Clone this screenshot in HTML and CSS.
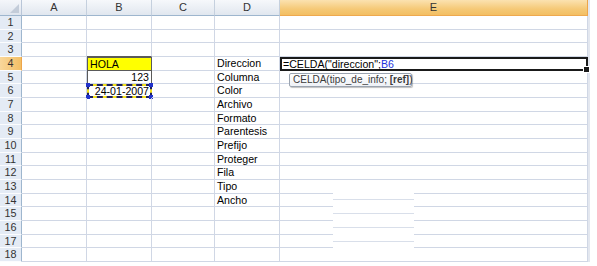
FILE: index.html
```html
<!DOCTYPE html>
<html lang="es">
<head>
    <meta charset="UTF-8">
    <title>CELDA</title>
    <link rel="stylesheet" href="styles.css">
</head>
<body>
    <div class="sheet">
        <!-- column headers -->
        <div class="corner"></div>
        <div class="col-head">A</div>
        <div class="col-head">B</div>
        <div class="col-head">C</div>
        <div class="col-head">D</div>
        <div class="col-head active">E</div>
        <div class="col-head edge"></div>

        <!-- 1 -->
        <div class="row-head">1</div>
        <div class="cell"></div><div class="cell"></div><div class="cell"></div><div class="cell"></div><div class="cell"></div><div class="edge"></div>
        <!-- 2 -->
        <div class="row-head">2</div>
        <div class="cell"></div><div class="cell"></div><div class="cell"></div><div class="cell"></div><div class="cell"></div><div class="edge"></div>
        <!-- 3 -->
        <div class="row-head">3</div>
        <div class="cell"></div><div class="cell above-box"></div><div class="cell"></div><div class="cell"></div><div class="cell"></div><div class="edge"></div>
        <!-- 4 -->
        <div class="row-head active">4</div>
        <div class="cell"></div>
        <div class="cell hola">HOLA</div>
        <div class="cell"></div>
        <div class="cell">Direccion</div>
        <div class="cell editing">
            =CELDA("direccion";<span class="ref">B6</span>
            <div class="tip">CELDA(tipo_de_info; <b>[ref]</b>)</div>
        </div>
        <div class="edge"></div>
        <!-- 5 -->
        <div class="row-head">5</div>
        <div class="cell"></div>
        <div class="cell num boxed">123</div>
        <div class="cell"></div>
        <div class="cell">Columna</div>
        <div class="cell"></div><div class="edge"></div>
        <!-- 6 -->
        <div class="row-head">6</div>
        <div class="cell"></div>
        <div class="cell num ants">24-01-2007<i class="h tl"></i><i class="h tr"></i><i class="h bl"></i><i class="h br"></i></div>
        <div class="cell"></div>
        <div class="cell">Color</div>
        <div class="cell"></div><div class="edge"></div>
        <!-- 7 -->
        <div class="row-head">7</div>
        <div class="cell"></div><div class="cell"></div><div class="cell"></div><div class="cell">Archivo</div><div class="cell"></div><div class="edge"></div>
        <!-- 8 -->
        <div class="row-head">8</div>
        <div class="cell"></div><div class="cell"></div><div class="cell"></div><div class="cell">Formato</div><div class="cell"></div><div class="edge"></div>
        <!-- 9 -->
        <div class="row-head">9</div>
        <div class="cell"></div><div class="cell"></div><div class="cell"></div><div class="cell">Parentesis</div><div class="cell"></div><div class="edge"></div>
        <!-- 10 -->
        <div class="row-head">10</div>
        <div class="cell"></div><div class="cell"></div><div class="cell"></div><div class="cell">Prefijo</div><div class="cell"></div><div class="edge"></div>
        <!-- 11 -->
        <div class="row-head">11</div>
        <div class="cell"></div><div class="cell"></div><div class="cell"></div><div class="cell">Proteger</div><div class="cell"></div><div class="edge"></div>
        <!-- 12 -->
        <div class="row-head">12</div>
        <div class="cell"></div><div class="cell"></div><div class="cell"></div><div class="cell">Fila</div><div class="cell"></div><div class="edge"></div>
        <!-- 13 -->
        <div class="row-head">13</div>
        <div class="cell"></div><div class="cell"></div><div class="cell"></div><div class="cell">Tipo</div><div class="cell"></div><div class="edge"></div>
        <!-- 14 -->
        <div class="row-head">14</div>
        <div class="cell"></div><div class="cell"></div><div class="cell"></div><div class="cell">Ancho</div><div class="cell"></div><div class="edge"></div>
        <!-- 15 -->
        <div class="row-head">15</div>
        <div class="cell"></div><div class="cell"></div><div class="cell"></div><div class="cell"></div><div class="cell"></div><div class="edge"></div>
        <!-- 16 -->
        <div class="row-head">16</div>
        <div class="cell"></div><div class="cell"></div><div class="cell"></div><div class="cell"></div><div class="cell"></div><div class="edge"></div>
        <!-- 17 -->
        <div class="row-head">17</div>
        <div class="cell"></div><div class="cell"></div><div class="cell"></div><div class="cell"></div><div class="cell"></div><div class="edge"></div>
        <!-- 18 -->
        <div class="row-head">18</div>
        <div class="cell"></div><div class="cell"></div><div class="cell"></div><div class="cell"></div><div class="cell"></div><div class="edge"></div>

        <!-- leftover redraw glitch over E14:E17 -->
        <div class="glitch"></div>
    </div>
</body>
</html>
```

FILE: styles.css
```css
* {
    margin: 0;
    padding: 0;
    box-sizing: border-box;
}

body {
    background: #fff;
    font-family: 'Liberation Sans', Arial, sans-serif;
    font-size: 10.6px;
    color: #000;
}

.sheet {
    position: relative;
    display: grid;
    grid-template-columns: 22px 65px 65px 63px 65px 308px 9px;
    grid-template-rows: 16px repeat(18, 13.68px);
}

/* headers */
.corner {
    position: relative;
    background: linear-gradient(#f4f6fa, #dfe5ee);
    border-right: 1px solid #b9c6d8;
    border-bottom: 1px solid #9eb6ce;
}

.corner::after {
    content: '';
    position: absolute;
    right: 2px;
    bottom: 2px;
    border-left: 9px solid transparent;
    border-bottom: 9px solid #c3ccd9;
}

.col-head {
    background: linear-gradient(#f6f8fb, #e1e7ef);
    border-right: 1px solid #c5d0de;
    border-bottom: 1px solid #9eb6ce;
    color: #333;
    font-size: 11px;
    line-height: 15px;
    text-align: center;
}

.col-head.active {
    background: linear-gradient(#fbe2b0, #f5c977 60%, #f3bf63);
    border-right: 1px solid #eda54a;
    border-bottom: 1px solid #eea94f;
}

.col-head.edge {
    background: #fff;
    border: none;
    border-left: 2px solid #e3e7ef;
}

.row-head {
    background: #e4ebf5;
    border-right: 1px solid #9eb6ce;
    border-bottom: 1px solid #fbfcfe;
    color: #333;
    font-size: 10.8px;
    line-height: 13px;
    text-align: center;
}

.row-head.active {
    background: linear-gradient(90deg, #f9d79b, #f3bf65);
    border-right-color: #eda54a;
}

/* cells */
.cell {
    position: relative;
    border-right: 1px solid #d0d7e5;
    border-bottom: 1px solid #d0d7e5;
    padding: 0 2px;
    line-height: 13px;
    white-space: nowrap;
}

.edge {
    border-left: 2px solid #e3e7ef;
}

.num {
    text-align: right;
}

.hola {
    background: #ffff00;
    border: 1px solid #5a5a5a;
    border-top-width: 1px;
    padding-left: 2px;
}

.above-box {
    border-bottom-color: #5a5a5a;
}

.boxed {
    border-left: 1px solid #5a5a5a;
    border-right: 1px solid #5a5a5a;
}

/* formula reference range B6 */
.ants {
    border: 2px dashed #1e1e60;
    background: linear-gradient(#fff, #fff) padding-box, #f4e21c border-box;
    line-height: 11px;
    padding-right: 1px;
}

.h {
    position: absolute;
    width: 4px;
    height: 4px;
    background: #2233cc;
}

.tl { left: -3px; top: -3px; }
.tr { right: -3px; top: -3px; }
.bl { left: -3px; bottom: -3px; }
.br { right: -3px; bottom: -3px; }

/* active cell in edit mode */
.editing {
    border: 2px solid #1a1a1a;
    line-height: 10px;
    padding-left: 1px;
    z-index: 2;
}

.editing::after {
    content: '';
    position: absolute;
    right: -4px;
    bottom: -4px;
    width: 5px;
    height: 5px;
    background: #1a1a1a;
    border: 1px solid #fff;
}

.ref {
    color: #2233dd;
}

.tip {
    position: absolute;
    left: 7px;
    top: 14px;
    width: 123px;
    height: 14px;
    padding-left: 3px;
    background: linear-gradient(#ffffff, #eef1f6);
    border: 1px solid #9aa3b0;
    border-radius: 2px;
    box-shadow: 1px 1px 1px rgba(0, 0, 0, 0.25);
    color: #3a3a3a;
    font-size: 10px;
    line-height: 12px;
}

.tip b {
    font-weight: bold;
}

/* stale gridlines left behind in E14:E17 */
.glitch {
    position: absolute;
    left: 333px;
    top: 193px;
    width: 81px;
    height: 57px;
    background:
        repeating-linear-gradient(to bottom,
            transparent 0, transparent 6px,
            #d9dfea 6px, #d9dfea 7px,
            transparent 7px, transparent 14px);
    background-color: #fff;
    background-size: 100% 56px;
    background-repeat: no-repeat;
}
```
